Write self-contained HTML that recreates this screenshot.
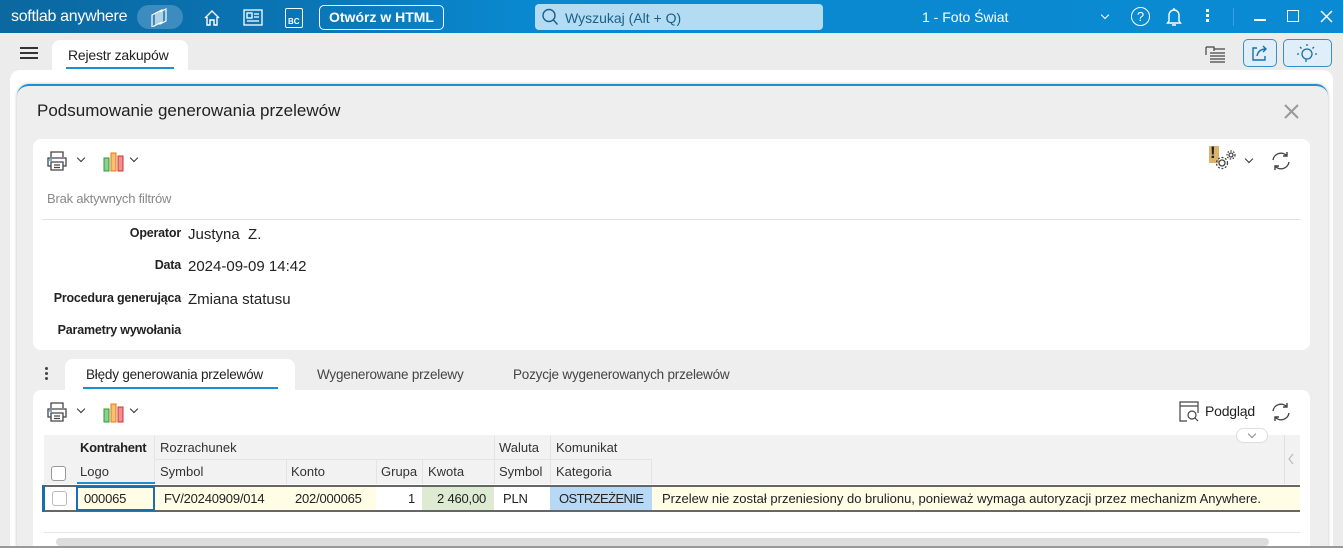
<!DOCTYPE html>
<html><head><meta charset="utf-8"><style>
*{margin:0;padding:0;box-sizing:border-box}
html,body{width:1343px;height:548px;overflow:hidden}
body{background:#ececec;font-family:"Liberation Sans",sans-serif;position:relative;color:#222}
.a{position:absolute}
.top{left:0;top:0;width:1343px;height:33px;background:linear-gradient(90deg,#0b68a0 0,#0a75b5 300px,#0a88cf 520px,#0a8ad2 100%)}
.w{color:#fff}
.lbl{font-weight:bold;font-size:12.5px;text-align:right;width:136px;left:45px;letter-spacing:-0.2px}
.val{font-size:15px;left:188px}
.th{font-size:13px;color:#333}
.cell{font-size:13px;top:489px;height:20px;line-height:20px;letter-spacing:-0.2px}
.chev{width:6px;height:6px;border-right:1.3px solid #333;border-bottom:1.3px solid #333;transform:rotate(45deg)}
</style></head><body>
<div class="a top"></div>
<div class="a w" style="left:11px;top:8px;font-size:16px;letter-spacing:-0.3px">softlab anywhere</div>
<div class="a" style="left:137px;top:5px;width:46px;height:24px;border-radius:12px;background:#3d8cbf"></div>
<svg class="a" style="left:150px;top:7px" width="20" height="20" fill="none" stroke="#fff" stroke-width="1.2"><path d="M2 8l6-3v12l-6 3zM6 6l6-3v12l-6 3zM10 5l6-3v12l-6 3z"/></svg>
<svg class="a" style="left:203px;top:9px" width="18" height="18" fill="none" stroke="#fff" stroke-width="1.4"><path d="M2 9L9 2l7 7M4 8v8h3v-5h4v5h3V8"/></svg>
<svg class="a" style="left:243px;top:9px" width="20" height="17" fill="none" stroke="#fff" stroke-width="1.3"><rect x="1" y="1" width="18" height="15"/><rect x="4" y="4" width="5" height="5"/><path d="M11 5h5M11 8h5M4 12h12"/></svg>
<div class="a" style="left:285px;top:8px;width:18px;height:20px;border:1.4px solid #fff;border-radius:2px;color:#fff;font-size:8px;font-weight:bold;padding:8px 0 0 2px">BC</div>
<div class="a w" style="left:319px;top:5px;width:125px;height:25px;border:1.4px solid #fff;border-radius:5px;text-align:center;line-height:22px;font-size:14px;font-weight:bold">Otwórz w HTML</div>
<div class="a" style="left:535px;top:4px;width:288px;height:26px;background:#b3dcf2;border-radius:4px"></div>
<svg class="a" style="left:541px;top:8px" width="18" height="18" fill="none" stroke="#1a5f8a" stroke-width="1.4"><circle cx="8" cy="7.5" r="6"/><path d="M12.5 12l4 4.5"/></svg>
<div class="a" style="left:565px;top:10px;font-size:14px;color:#1a5f8a">Wyszukaj (Alt + Q)</div>
<div class="a w" style="left:922px;top:9px;font-size:14px">1 - Foto Świat</div>
<div class="a chev" style="left:1102px;top:12px;border-color:#fff"></div>
<div class="a w" style="left:1131px;top:7px;width:19px;height:19px;border:1.4px solid #fff;border-radius:50%;text-align:center;font-size:13px;line-height:17px">?</div>
<svg class="a" style="left:1166px;top:7px" width="16" height="20" fill="none" stroke="#fff" stroke-width="1.4"><path d="M3 14V8a5 5 0 0110 0v6l1.5 2h-13zM6 18h4M8 1v2"/></svg>
<div class="a" style="left:1206px;top:9px;width:3px;height:3px;background:#fff;box-shadow:0 5px 0 #fff,0 10px 0 #fff"></div>
<div class="a" style="left:1233px;top:8px;width:1px;height:18px;background:#3ba2dc"></div>
<div class="a" style="left:1254px;top:19px;width:12px;height:1.5px;background:#fff"></div>
<div class="a" style="left:1287px;top:10px;width:12px;height:12px;border:1.5px solid #fff"></div>
<svg class="a" style="left:1320px;top:10px" width="13" height="13" stroke="#fff" stroke-width="1.5"><path d="M1 1l11 11M12 1L1 12"/></svg>
<!-- second row -->
<div class="a" style="left:20px;top:47px;width:18px;height:2px;background:#333;box-shadow:0 5px 0 #333,0 10px 0 #333"></div>
<div class="a" style="left:52px;top:40px;width:136px;height:34px;background:#fff;border-radius:8px 8px 0 0"></div>
<div class="a" style="left:68px;top:47px;font-size:14px;letter-spacing:-0.2px">Rejestr zakupów</div>
<div class="a" style="left:66px;top:67px;width:108px;height:2px;background:#1a8fd6"></div>
<svg class="a" style="left:1205px;top:45px" width="22" height="18" fill="none" stroke="#444" stroke-width="1.2"><path d="M1 2h8v4M1 2v8M9 4h11M5 8h15M5 11h15M5 14h15M5 17h15"/></svg>
<div class="a" style="left:1243px;top:39px;width:34px;height:28px;border:1px solid #3a8fc2;border-radius:5px;background:#dfeef8"></div>
<svg class="a" style="left:1251px;top:44px" width="18" height="18" fill="none" stroke="#1a6fa8" stroke-width="1.4"><path d="M6 4H2v12h12v-4M6 12c1-5 4-7 9-7M12 2l3 3-3 3"/></svg>
<div class="a" style="left:1283px;top:39px;width:49px;height:28px;border:1px solid #3a8fc2;border-radius:5px;background:#dfeef8"></div>
<svg class="a" style="left:1296px;top:42px" width="22" height="22" fill="none" stroke="#1a6fa8" stroke-width="1.3"><circle cx="11" cy="12" r="5"/><path d="M11 2v2M4 5l1.5 1.5M18 5l-1.5 1.5M1 12h2M19 12h2M10 17v3"/></svg>
<!-- outer panel -->
<div class="a" style="left:10px;top:70px;width:1323px;height:480px;background:#fff;border-radius:10px 10px 0 0"></div>
<div class="a" style="left:17px;top:84px;width:1311px;height:470px;background:#eeeeee;border-top:2px solid #1a8fd6;border-radius:12px 12px 0 0;box-shadow:0 0 3px #bbb"></div>
<div class="a" style="left:37px;top:101px;font-size:17px;color:#222">Podsumowanie generowania przelewów</div>
<svg class="a" style="left:1284px;top:104px" width="15" height="15" stroke="#999" stroke-width="2"><path d="M1 1l13 13M14 1L1 14"/></svg>
<!-- card 1 -->
<div class="a" style="left:33px;top:139px;width:1277px;height:211px;background:#fff;border-radius:8px"></div>
<svg class="a" style="left:46px;top:150px" width="22" height="22" fill="none" stroke="#444" stroke-width="1.3"><path d="M5 7V2h12v5M5 16H2V8h18v8h-3M5 12h12v8H5zM8 15h6M8 17.5h6"/><path d="M3 10h3" stroke="#1a8fd6"/></svg>
<div class="a chev" style="left:78px;top:155px"></div>
<svg class="a" style="left:103px;top:150px" width="22" height="22"><rect x="1" y="8" width="5" height="13" fill="#8fd08f" stroke="#2a9a3a"/><rect x="8" y="3" width="5" height="18" fill="#f8c070" stroke="#e07a10"/><rect x="15" y="6" width="5" height="15" fill="#f09090" stroke="#d03030"/></svg>
<div class="a chev" style="left:131px;top:155px"></div>
<div class="a" style="left:1209px;top:146px;width:10px;height:17px;background:#d9b46a"></div>
<div class="a" style="left:1210px;top:143px;font-size:17px;font-weight:bold;color:#222">!</div>
<svg class="a" style="left:1214px;top:148px" width="24" height="24" fill="none" stroke="#444" stroke-width="1.3"><circle cx="8" cy="15" r="3"/><circle cx="8" cy="15" r="5.5" stroke-dasharray="2 1.6"/><circle cx="17" cy="7" r="2"/><circle cx="17" cy="7" r="4" stroke-dasharray="1.6 1.4"/></svg>
<div class="a chev" style="left:1246px;top:156px"></div>
<svg class="a" style="left:1270px;top:150px" width="22" height="22" fill="none" stroke="#444" stroke-width="1.4"><path d="M3 10a8 8 0 0114-4M19 12a8 8 0 01-14 4M17 2v4h-4M5 20v-4h4"/></svg>
<div class="a" style="left:47px;top:191px;font-size:13px;color:#888;letter-spacing:-0.2px">Brak aktywnych filtrów</div>
<div class="a" style="left:42px;top:219px;width:1259px;height:1px;background:#e2e2e2"></div>
<div class="a lbl" style="top:226px">Operator</div><div class="a val" style="top:226px">Justyna&nbsp; Z.</div>
<div class="a lbl" style="top:258px">Data</div><div class="a val" style="top:258px">2024-09-09 14:42</div>
<div class="a lbl" style="top:291px">Procedura generująca</div><div class="a val" style="top:291px">Zmiana statusu</div>
<div class="a lbl" style="top:323px">Parametry wywołania</div>
<!-- tabs -->
<div class="a" style="left:45px;top:367px;width:3px;height:3px;background:#444;border-radius:50%;box-shadow:0 5px 0 #444,0 10px 0 #444"></div>
<div class="a" style="left:65px;top:359px;width:230px;height:35px;background:#fff;border-radius:8px 8px 0 0"></div>
<div class="a" style="left:86px;top:367px;font-size:13.5px;color:#222;letter-spacing:-0.2px">Błędy generowania przelewów</div>
<div class="a" style="left:83px;top:387px;width:195px;height:2px;background:#1a8fd6"></div>
<div class="a" style="left:317px;top:367px;font-size:13.5px;color:#444;letter-spacing:-0.2px">Wygenerowane przelewy</div>
<div class="a" style="left:513px;top:367px;font-size:13.5px;color:#444;letter-spacing:-0.2px">Pozycje wygenerowanych przelewów</div>
<!-- card 2 -->
<div class="a" style="left:33px;top:390px;width:1277px;height:160px;background:#fff;border-radius:8px 8px 0 0"></div>
<svg class="a" style="left:46px;top:401px" width="22" height="22" fill="none" stroke="#444" stroke-width="1.3"><path d="M5 7V2h12v5M5 16H2V8h18v8h-3M5 12h12v8H5zM8 15h6M8 17.5h6"/><path d="M3 10h3" stroke="#1a8fd6"/></svg>
<div class="a chev" style="left:78px;top:406px"></div>
<svg class="a" style="left:103px;top:401px" width="22" height="22"><rect x="1" y="8" width="5" height="13" fill="#8fd08f" stroke="#2a9a3a"/><rect x="8" y="3" width="5" height="18" fill="#f8c070" stroke="#e07a10"/><rect x="15" y="6" width="5" height="15" fill="#f09090" stroke="#d03030"/></svg>
<div class="a chev" style="left:131px;top:406px"></div>
<svg class="a" style="left:1179px;top:401px" width="22" height="22" fill="none" stroke="#444" stroke-width="1.2"><path d="M1 1h18v4H1zM1 5v15h7M19 5v7"/><circle cx="13" cy="14" r="4"/><path d="M16 17l3 3"/></svg>
<div class="a" style="left:1205px;top:403px;font-size:14px;letter-spacing:-0.2px">Podgląd</div>
<svg class="a" style="left:1270px;top:401px" width="22" height="22" fill="none" stroke="#444" stroke-width="1.4"><path d="M3 10a8 8 0 0114-4M19 12a8 8 0 01-14 4M17 2v4h-4M5 20v-4h4"/></svg>
<!-- grid -->
<div class="a" style="left:44px;top:435px;width:1256px;height:49px;background:#f2f2f2"></div>
<div class="a" style="left:1284px;top:435px;width:16px;height:49px;border-left:1px solid #e0e0e0"></div>
<svg class="a" style="left:1287px;top:453px" width="8" height="12" fill="none" stroke="#bbb" stroke-width="1.2"><path d="M6 1L2 6l4 5"/></svg>
<div class="a" style="left:1236px;top:428px;width:32px;height:15px;border:1px solid #ddd;border-radius:8px;background:#fff"></div>
<div class="a chev" style="left:1249px;top:431px;border-color:#888"></div>
<div class="a" style="left:154px;top:459px;width:497px;height:25px;border-top:1px solid #e4e4e4"></div>
<div class="a" style="left:154px;top:436px;width:1px;height:48px;background:#e4e4e4"></div>
<div class="a" style="left:286px;top:459px;width:1px;height:25px;background:#e4e4e4"></div>
<div class="a" style="left:376px;top:459px;width:1px;height:25px;background:#e4e4e4"></div>
<div class="a" style="left:422px;top:459px;width:1px;height:25px;background:#e4e4e4"></div>
<div class="a" style="left:494px;top:436px;width:1px;height:48px;background:#e4e4e4"></div>
<div class="a" style="left:550px;top:436px;width:1px;height:48px;background:#e4e4e4"></div>
<div class="a" style="left:651px;top:459px;width:1px;height:25px;background:#e4e4e4"></div>
<div class="a th" style="left:80px;top:440px;font-weight:bold;color:#222;letter-spacing:-0.3px">Kontrahent</div>
<div class="a th" style="left:160px;top:440px">Rozrachunek</div>
<div class="a th" style="left:499px;top:440px">Waluta</div>
<div class="a th" style="left:556px;top:440px">Komunikat</div>
<div class="a" style="left:51px;top:466px;width:15px;height:15px;border:1px solid #999;border-radius:3px;background:#fff"></div>
<div class="a th" style="left:80px;top:464px">Logo</div>
<div class="a" style="left:77px;top:482px;width:78px;height:2px;background:#1a8fd6"></div>
<div class="a th" style="left:160px;top:464px">Symbol</div>
<div class="a th" style="left:291px;top:464px">Konto</div>
<div class="a th" style="left:381px;top:464px">Grupa</div>
<div class="a th" style="left:428px;top:464px">Kwota</div>
<div class="a th" style="left:499px;top:464px">Symbol</div>
<div class="a th" style="left:556px;top:464px">Kategoria</div>
<!-- data row -->
<div class="a" style="left:42px;top:485px;width:1258px;height:27px;border-top:2px solid #666;border-bottom:2px solid #666;background:#fffde6"></div>
<div class="a" style="left:42px;top:485px;width:3px;height:27px;background:#1a6fa8"></div>
<div class="a" style="left:45px;top:487px;width:31px;height:23px;background:#fff"></div>
<div class="a" style="left:52px;top:491px;width:15px;height:15px;border:1px solid #bbb;border-radius:3px;background:#fff"></div>
<div class="a" style="left:76px;top:486px;width:79px;height:25px;border:2.5px solid #1a6fa8;background:#fffde6"></div>
<div class="a" style="left:376px;top:487px;width:46px;height:23px;background:#fff"></div>
<div class="a" style="left:422px;top:487px;width:72px;height:23px;background:#dcebd2"></div>
<div class="a" style="left:494px;top:487px;width:56px;height:23px;background:#fff"></div>
<div class="a" style="left:550px;top:487px;width:102px;height:23px;background:#b7d9f5"></div>
<div class="a cell" style="left:84px">000065</div>
<div class="a cell" style="left:164px">FV/20240909/014</div>
<div class="a cell" style="left:295px">202/000065</div>
<div class="a cell" style="left:408px">1</div>
<div class="a cell" style="left:437px">2 460,00</div>
<div class="a cell" style="left:503px">PLN</div>
<div class="a cell" style="left:559px;letter-spacing:-0.6px">OSTRZEŻENIE</div>
<div class="a cell" style="left:662px;letter-spacing:0">Przelew nie został przeniesiony do brulionu, ponieważ wymaga autoryzacji przez mechanizm Anywhere.</div>
<div class="a" style="left:44px;top:532px;width:1256px;height:1px;background:#e6e6e6"></div>
<div class="a" style="left:56px;top:538px;width:1213px;height:8px;background:#ddd;border-radius:4px"></div>
<div class="a" style="left:0;top:546px;width:1343px;height:2px;background:#999"></div>
</body></html>
